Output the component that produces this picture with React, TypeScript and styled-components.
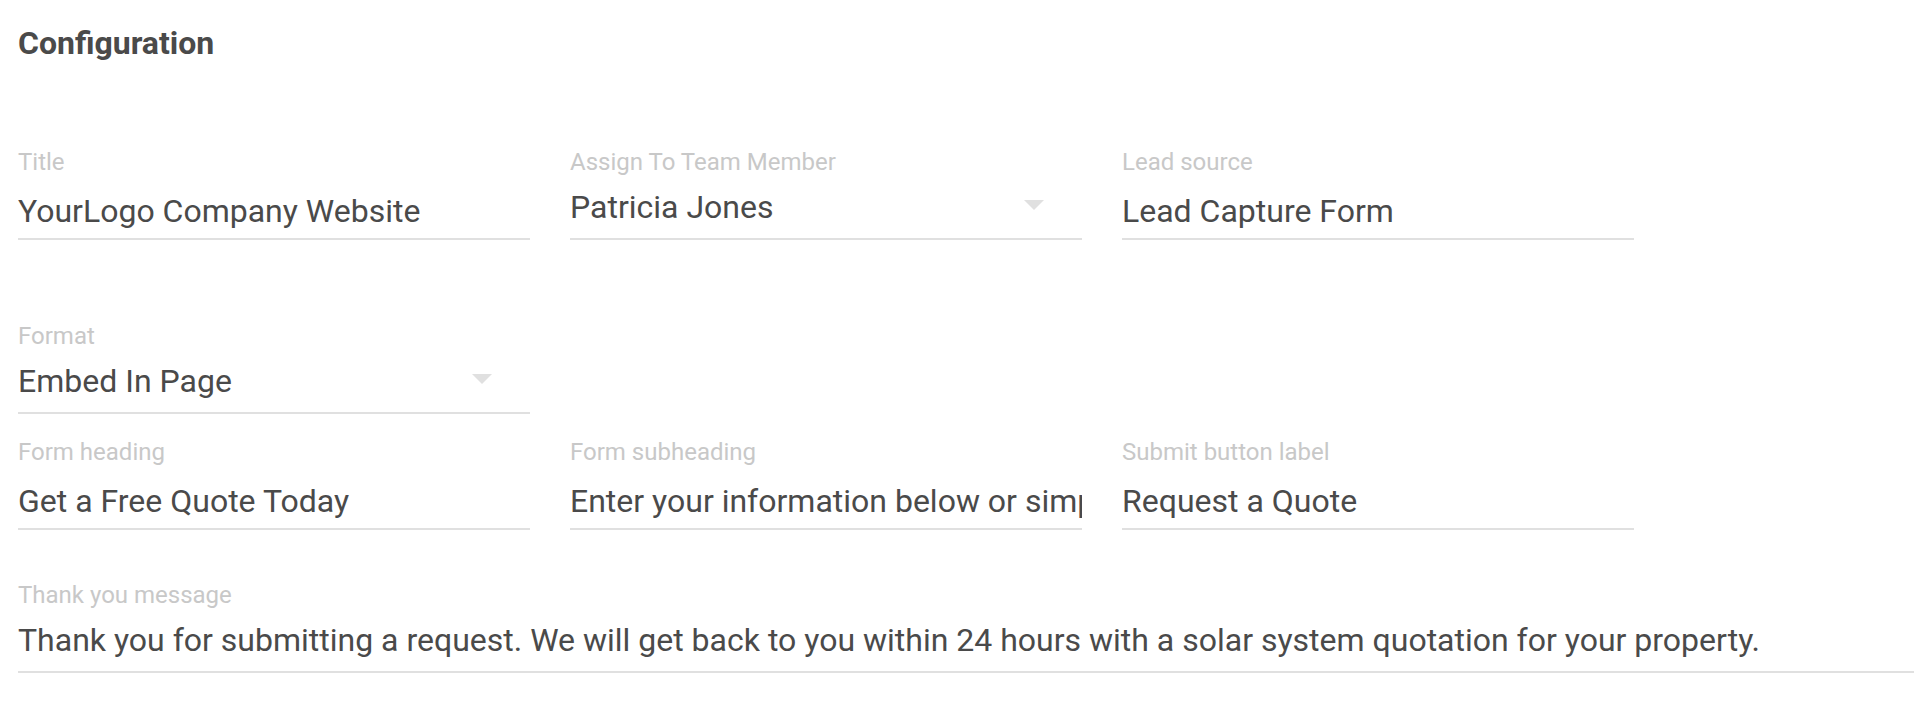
import React from "react";
import styled, { createGlobalStyle } from "styled-components";

const Global = createGlobalStyle`
  html, body { margin: 0; padding: 0; background: #ffffff; }
  body { font-family: Roboto, "Noto Sans", "Liberation Sans", sans-serif; -webkit-font-smoothing: antialiased; }
`;

const Page = styled.div`
  padding: 23px 18px 0 18px;
  box-sizing: border-box;
  width: 1932px;
`;

const Heading = styled.h2`
  margin: 0;
  font-size: 32px;
  line-height: 40px;
  font-weight: 700;
  color: #4a4a4a;
`;

const Row = styled.div<{ $top: number; $full?: boolean }>`
  display: grid;
  grid-template-columns: ${(p) => (p.$full ? "1fr" : "repeat(3, 512px)")};
  column-gap: 40px;
  margin-top: ${(p) => p.$top}px;
`;

const Field = styled.div`
  display: flex;
  flex-direction: column;
  min-width: 0;
`;

const Label = styled.label<{ $raised?: boolean }>`
  font-size: 24px;
  line-height: 24px;
  color: #c8c8c8;
  margin-bottom: ${(p) => (p.$raised ? 13 : 17)}px;
  white-space: nowrap;
`;

const Control = styled.div<{ $raised?: boolean }>`
  display: flex;
  align-items: flex-start;
  height: 40px;
  padding-bottom: ${(p) => (p.$raised ? 11 : 7)}px;
  border-bottom: 2px solid #e0e0e0;
`;

const Value = styled.div`
  flex: 1;
  min-width: 0;
  font-size: 32px;
  line-height: 40px;
  color: #4a4a4a;
  white-space: nowrap;
  overflow: hidden;
`;

const Arrow = styled.svg`
  flex: none;
  width: 20px;
  height: 10px;
  margin-top: 13px;
  margin-right: 38px;
  fill: #e0e0e0;
`;

const DropArrow = () => (
  <Arrow viewBox="7 10 10 5">
    <path d="M7 10l5 5 5-5z" />
  </Arrow>
);

type FieldProps = { label: string; value: string; select?: boolean; multiline?: boolean };

const FormField = ({ label, value, select, multiline }: FieldProps) => {
  const raised = select || multiline;
  return (
    <Field>
      <Label $raised={raised}>{label}</Label>
      <Control $raised={raised}>
        <Value>{value}</Value>
        {select && <DropArrow />}
      </Control>
    </Field>
  );
};

export default function App() {
  return (
    <>
      <Global />
      <Page>
        <Heading>Configuration</Heading>
        <Row $top={87}>
          <FormField label="Title" value="YourLogo Company Website" />
          <FormField label="Assign To Team Member" value="Patricia Jones" select />
          <FormField label="Lead source" value="Lead Capture Form" />
        </Row>
        <Row $top={84}>
          <FormField label="Format" value="Embed In Page" select />
        </Row>
        <Row $top={26}>
          <FormField label="Form heading" value="Get a Free Quote Today" />
          <FormField
            label="Form subheading"
            value="Enter your information below or simply give us a call today"
          />
          <FormField label="Submit button label" value="Request a Quote" />
        </Row>
        <Row $top={53} $full>
          <FormField
            label="Thank you message"
            multiline
            value="Thank you for submitting a request. We will get back to you within 24 hours with a solar system quotation for your property."
          />
        </Row>
      </Page>
    </>
  );
}
